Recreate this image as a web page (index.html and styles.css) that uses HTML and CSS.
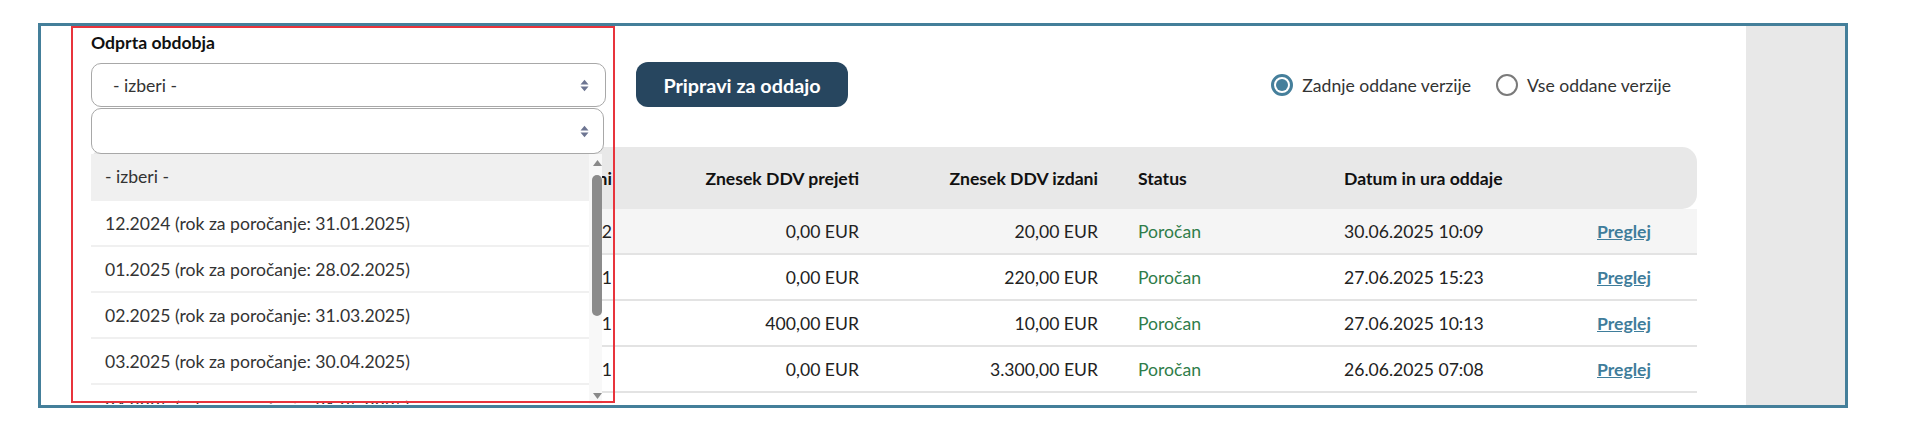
FILE: index.html
```html
<!DOCTYPE html>
<html lang="sl">
<head>
<meta charset="utf-8">
<title>Odprta obdobja</title>
<link rel="stylesheet" href="styles.css">
</head>
<body>
<div class="frame">
  <div class="content">
    <div class="toolbar">
      <div class="field">
        <div class="field-label">Odprta obdobja</div>
        <div class="select">
          <span class="select-text">- izberi -</span>
          <svg class="select-arrows" viewBox="0 0 9 13" width="9" height="13"><path d="M0.5 5.5 L4.5 0.8 L8.5 5.5 Z M0.5 7.5 L4.5 12.2 L8.5 7.5 Z" fill="#6d7592"/></svg>
        </div>
        <div class="popup">
          <div class="select select-search">
            <span class="select-text"></span>
            <svg class="select-arrows" viewBox="0 0 9 13" width="9" height="13"><path d="M0.5 5.5 L4.5 0.8 L8.5 5.5 Z M0.5 7.5 L4.5 12.2 L8.5 7.5 Z" fill="#6d7592"/></svg>
          </div>
          <div class="list">
            <div class="options">
              <div class="option option-active">- izberi -</div>
              <div class="option">12.2024 (rok za poročanje: 31.01.2025)</div>
              <div class="option">01.2025 (rok za poročanje: 28.02.2025)</div>
              <div class="option">02.2025 (rok za poročanje: 31.03.2025)</div>
              <div class="option">03.2025 (rok za poročanje: 30.04.2025)</div>
              <div class="option">04.2025 (rok za poročanje: 31.05.2025)</div>
            </div>
            <div class="scrollbar">
              <svg class="sb-arrow" viewBox="0 0 9 6" width="9" height="6"><path d="M0 6 L4.5 0 L9 6 Z" fill="#8a8a8a"/></svg>
              <div class="sb-thumb"></div>
              <div class="sb-spacer"></div>
              <svg class="sb-arrow" viewBox="0 0 9 6" width="9" height="6"><path d="M0 0 L4.5 6 L9 0 Z" fill="#8a8a8a"/></svg>
            </div>
          </div>
        </div>
        <div class="highlight"></div>
      </div>
      <button class="btn-primary" type="button">Pripravi za oddajo</button>
      <div class="radios">
        <label class="radio"><span class="radio-dot radio-on"></span><span>Zadnje oddane verzije</span></label>
        <label class="radio"><span class="radio-dot"></span><span>Vse oddane verzije</span></label>
      </div>
    </div>

    <div class="grid">
      <div class="row head">
        <div class="cell"></div>
        <div class="cell num">Oddani</div>
        <div class="cell num">Znesek DDV prejeti</div>
        <div class="cell num">Znesek DDV izdani</div>
        <div class="cell">Status</div>
        <div class="cell">Datum in ura oddaje</div>
        <div class="cell"></div>
      </div>
      <div class="row striped">
        <div class="cell"></div>
        <div class="cell num">2</div>
        <div class="cell num">0,00 EUR</div>
        <div class="cell num">20,00 EUR</div>
        <div class="cell status">Poročan</div>
        <div class="cell">30.06.2025 10:09</div>
        <div class="cell"><a class="link" href="#">Preglej</a></div>
      </div>
      <div class="row">
        <div class="cell"></div>
        <div class="cell num">1</div>
        <div class="cell num">0,00 EUR</div>
        <div class="cell num">220,00 EUR</div>
        <div class="cell status">Poročan</div>
        <div class="cell">27.06.2025 15:23</div>
        <div class="cell"><a class="link" href="#">Preglej</a></div>
      </div>
      <div class="row">
        <div class="cell"></div>
        <div class="cell num">1</div>
        <div class="cell num">400,00 EUR</div>
        <div class="cell num">10,00 EUR</div>
        <div class="cell status">Poročan</div>
        <div class="cell">27.06.2025 10:13</div>
        <div class="cell"><a class="link" href="#">Preglej</a></div>
      </div>
      <div class="row">
        <div class="cell"></div>
        <div class="cell num">1</div>
        <div class="cell num">0,00 EUR</div>
        <div class="cell num">3.300,00 EUR</div>
        <div class="cell status">Poročan</div>
        <div class="cell">26.06.2025 07:08</div>
        <div class="cell"><a class="link" href="#">Preglej</a></div>
      </div>
    </div>
  </div>
  <div class="side"></div>
</div>
</body>
</html>
```
FILE: styles.css
```css
* { box-sizing: border-box; }
html, body { margin: 0; padding: 0; background: #fff; }
body {
  font-family: Lato, "Open Sans", "Liberation Sans", sans-serif;
  font-size: 17.6px;
  color: #222;
}

.frame {
  margin: 23px 0 0 38px;
  width: 1810px;
  height: 385px;
  border: 3px solid #447f9a;
  display: flex;
  overflow: hidden;
  background: #fff;
}
.content {
  flex: 1;
  padding: 6px 49px 0 50px;
}
.side {
  width: 99px;
  background: #e8e8e8;
}

.toolbar {
  display: flex;
  align-items: flex-end;
  gap: 30px;
}
.field {
  position: relative;
  width: 515px;
}
.field-label {
  font-weight: 700;
  font-size: 17.6px;
  line-height: 21px;
  color: #111;
  margin-bottom: 10px;
}
.select {
  height: 44px;
  border: 1.5px solid #a8a8a8;
  border-radius: 10px;
  background: #fff;
  display: flex;
  align-items: center;
  justify-content: space-between;
  padding: 0 16px 0 21px;
  color: #333;
}
.select-text { font-size: 17.6px; }
.select-arrows { display: block; }

.popup {
  position: absolute;
  top: calc(100% + 1px);
  left: 0;
  width: 513px;
  z-index: 5;
}
.select-search {
  height: 46px;
  padding-right: 14px;
}
.list {
  width: 511px;
  height: 250px;
  display: flex;
  background: #fff;
  overflow: hidden;
}
.options { flex: 1; }
.option {
  height: 46px;
  display: flex;
  align-items: center;
  padding-left: 14px;
  border-bottom: 2px solid #f0f0f0;
  color: #333;
  white-space: nowrap;
}
.option-active {
  background: #f0f0f0;
  border-bottom-color: #f0f0f0;
  height: 47px;
}
.scrollbar {
  width: 13px;
  background: #f8f8f8;
  display: flex;
  flex-direction: column;
  align-items: center;
  padding: 6px 0 5px 3px;
}
.sb-arrow { display: block; flex: none; }
.sb-thumb {
  margin-top: 9px;
  width: 10px;
  height: 141px;
  border-radius: 5px;
  background: #8b8b8b;
  flex: none;
}
.sb-spacer { flex: 1; }

.highlight {
  position: absolute;
  left: -20px;
  top: -6px;
  width: 544px;
  height: 377px;
  border: 2px solid #e8343c;
  pointer-events: none;
  z-index: 6;
}

.btn-primary {
  height: 45px;
  width: 212px;
  border: 0;
  border-radius: 12px;
  background: #27465f;
  color: #fff;
  font-family: inherit;
  font-weight: 700;
  font-size: 19.8px;
  cursor: pointer;
}

.radios {
  margin-left: auto;
  margin-right: 26px;
  height: 44px;
  display: flex;
  align-items: center;
  gap: 25px;
}
.radio {
  display: flex;
  align-items: center;
  gap: 9px;
  color: #333;
}
.radio-dot {
  width: 22px;
  height: 22px;
  border-radius: 50%;
  border: 2px solid #7a7a7a;
  background: #fff;
  position: relative;
}
.radio-on {
  border: 3px solid #457f9b;
}
.radio-on::after {
  content: "";
  position: absolute;
  left: 2px;
  top: 2px;
  width: 12px;
  height: 12px;
  border-radius: 50%;
  background: #457f9b;
}

.grid {
  margin-top: 40px;
}
.row {
  display: grid;
  grid-template-columns: 300px 241px 247px 239px 206px 253px 120px;
  height: 46px;
  border-bottom: 2px solid #e3e3e3;
  align-items: center;
}
.row.head {
  height: 62px;
  background: #e8e8e8;
  border-radius: 15px;
  border-bottom: 0;
  font-weight: 700;
  color: #111;
}
.row.striped { background: #f5f5f5; }
.cell {
  padding: 0 20px;
  white-space: nowrap;
}
.cell.num { text-align: right; }
.status { color: #2f7d4a; }
.link {
  color: #3f7d9b;
  font-weight: 700;
  text-decoration: underline;
}
```
